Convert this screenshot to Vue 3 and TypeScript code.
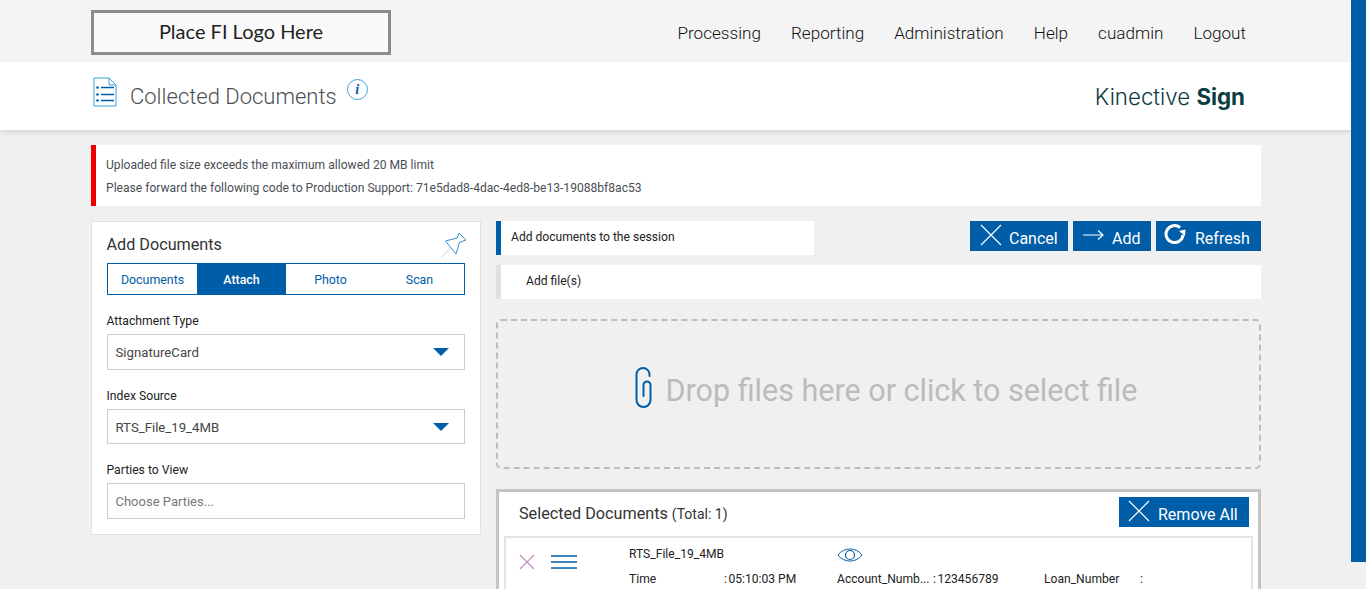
<script setup lang="ts">
const nav: string[] = ['Processing', 'Reporting', 'Administration', 'Help', 'cuadmin', 'Logout']
const tabs: { label: string; active?: boolean }[] = [
  { label: 'Documents' },
  { label: 'Attach', active: true },
  { label: 'Photo' },
  { label: 'Scan' },
]
</script>

<template>
  <div class="page">
    <div class="scroll-thumb"></div>
    <header class="top">
      <div class="wrap top-in">
        <div class="logo">Place FI Logo Here</div>
        <nav class="nav">
          <a v-for="n in nav" :key="n">{{ n }}</a>
        </nav>
      </div>
    </header>
    <section class="titlebar">
      <div class="wrap title-in">
        <svg class="doc-ic" width="24" height="30" viewBox="0 0 24 30" fill="none">
          <path d="M1 1H16L23 8V29H1Z" stroke="#3ea0d8" stroke-width="1" />
          <path d="M16 1V8H23" stroke="#3ea0d8" stroke-width="1" />
          <path d="M8 10.500H21M8 17.500H21M8 23.500H21" stroke="#005da8" stroke-width="1.600" />
          <circle cx="4.500" cy="10.500" r="1.300" fill="#005da8" />
          <circle cx="4.500" cy="17.500" r="1.300" fill="#005da8" />
          <circle cx="4.500" cy="23.500" r="1.300" fill="#005da8" />
        </svg>
        <h1 class="title">Collected Documents</h1>
        <span class="info"><i>i</i></span>
        <div class="brand">Kinective <b>Sign</b></div>
      </div>
    </section>

    <main class="wrap main">
      <div class="alert">
        <p>Uploaded file size exceeds the maximum allowed 20 MB limit</p>
        <p>Please forward the following code to Production Support: 71e5dad8-4dac-4ed8-be13-19088bf8ac53</p>
      </div>

      <div class="cols">
        <aside class="card">
          <div class="card-head">
            <h2>Add Documents</h2>
            <svg class="pin" width="26" height="26" viewBox="0 0 26 26" fill="none">
              <path d="M0.500 25.500L9 16.500" stroke="#b9d6ea" stroke-width="1" />
              <path d="M18 1L16 6L4.500 9L15 22L18.500 10.500L25 8Z" stroke="#2f8fd0" stroke-width="1" stroke-linejoin="round" />
            </svg>
          </div>
          <div class="tabs">
            <button v-for="t in tabs" :key="t.label" class="tab" :class="{ on: t.active }">{{ t.label }}</button>
          </div>
          <label class="lbl">Attachment Type</label>
          <div class="select">
            <span>SignatureCard</span><em class="caret"></em>
          </div>
          <label class="lbl">Index Source</label>
          <div class="select short">
            <span>RTS_File_19_4MB</span><em class="caret"></em>
          </div>
          <label class="lbl">Parties to View</label>
          <div class="select ph"><span>Choose Parties...</span></div>
        </aside>

        <div class="right">
          <div class="r-top">
            <div class="hint">Add documents to the session</div>
            <div class="btns">
              <button class="btn cancel">
                <svg class="up" width="22" height="22" viewBox="0 0 22 22" fill="none"><path d="M1 1L21 21M21 1L1 21" stroke="#fff" stroke-width="1.200" /></svg>
                <span class="t">Cancel</span>
              </button>
              <button class="btn add">
                <svg class="up" width="22" height="12" viewBox="0 0 22 12" fill="none"><path d="M0 6H20M15 1.500L20 6L15 10.500" stroke="#fff" stroke-width="1.200" /></svg>
                <span class="t">Add</span>
              </button>
              <button class="btn refresh">
                <svg class="up" width="24" height="24" viewBox="0 0 24 24" fill="none">
                  <path d="M16 4.500A8.500 8.500 0 1 0 19 12" stroke="#fff" stroke-width="3" />
                  <path d="M15 8L21.500 6.500L21 13Z" fill="#fff" />
                </svg>
                <span class="t">Refresh</span>
              </button>
            </div>
          </div>
          <div class="addfile">Add file(s)</div>
          <div class="drop">
            <svg class="clip" width="18" height="42" viewBox="0 0 18 42" fill="none">
              <path d="M14.500 9V7.500A6.500 6.500 0 0 0 1.500 7.500V33A7 7 0 0 0 15.500 33V18A3.500 3.500 0 0 0 8.500 18V29" stroke="#005da8" stroke-width="2" stroke-linecap="round" />
            </svg>
            <span>Drop files here or click to select file</span>
          </div>
          <section class="selected">
            <div class="sel-head">
              <div class="sel-title">Selected Documents <small>(Total: 1)</small></div>
              <button class="btn remove">
                <svg class="up" width="22" height="22" viewBox="0 0 22 22" fill="none"><path d="M1 1L21 21M21 1L1 21" stroke="#fff" stroke-width="1.200" /></svg>
                <span class="t">Remove All</span>
              </button>
            </div>
            <div class="doc">
              <div class="doc-icons">
                <svg class="ic-x" width="18" height="18" viewBox="0 0 18 18" fill="none"><path d="M2 2L16 16M16 2L2 16" stroke="#c88cc0" stroke-width="1.200" /></svg>
                <svg class="ic-lines" width="26" height="16" viewBox="0 0 26 16" fill="none"><path d="M0 2H26M0 8H26M0 14H26" stroke="#005da8" stroke-width="1.500" /></svg>
              </div>
              <div class="doc-grid">
                <div class="name">RTS_File_19_4MB</div>
                <div class="eye">
                  <svg width="26" height="16" viewBox="0 0 26 16" fill="none">
                    <path d="M1 8C7 0 19 0 25 8C19 16 7 16 1 8Z" stroke="#005da8" stroke-width="1" />
                    <circle cx="13" cy="8" r="4.500" stroke="#005da8" stroke-width="1.200" />
                  </svg>
                </div>
                <div class="blank"></div>
                <div>Time</div><div class="v"><span class="c">:</span>05:10:03 PM</div>
                <div>Account_Numb...</div><div class="v v2"><span class="c">:</span>123456789</div>
                <div class="k3">Loan_Number</div><div>:</div>
              </div>
            </div>
          </section>
        </div>
      </div>
    </main>
  </div>
</template>

<style>
html, body { margin: 0; height: 589px; overflow: hidden; background: #f0f0f0; }
</style>

<style scoped>
.page {
  position: relative;
  height: 589px;
  overflow: hidden;
  background: #f0f0f0;
  font-family: Roboto, "Liberation Sans", sans-serif;
  color: #333;
}
.scroll-thumb {
  position: absolute;
  right: 0;
  top: 0;
  width: 15px;
  height: 562px;
  background: #005da8;
  z-index: 3;
}
.wrap { width: 1170px; margin-left: 91px; }
.top { height: 62px; background: #f4f4f4; }
.top-in { display: flex; justify-content: space-between; padding-top: 10px; box-sizing: border-box; }
.logo {
  width: 300px;
  height: 45px;
  box-sizing: border-box;
  border: 3px solid #8c8c8c;
  background: #fafafa;
  font-family: Lato, sans-serif;
  font-size: 20px;
  line-height: 37px;
  text-align: center;
  color: #222;
}
.nav { display: flex; gap: 30px; padding: 13px 15px 0 0; font-size: 17.130px; font-weight: 300; line-height: 20px; color: #111; }
.titlebar { height: 68px; background: #fff; box-shadow: 0 2px 5px rgba(0, 0, 0, 0.12); position: relative; }
.title-in { display: flex; align-items: flex-start; position: relative; }
.doc-ic { margin: 15px 0 0 2px; }
.title { margin: 21px 0 0 13px; font-size: 22px; font-weight: 300; line-height: 28px; color: #4a4f55; }
.info {
  width: 19px;
  height: 19px;
  margin: 17px 0 0 10px;
  border: 1px solid #3ea0d8;
  border-radius: 50%;
  text-align: center;
  font: italic bold 14px/19px "Liberation Serif", serif;
  color: #005da8;
}
.brand { margin: 20px 16px 0 auto; font-family: Inter, sans-serif; font-size: 22.300px; font-weight: 300; line-height: 30px; color: #0c3c44; }
.brand b { font-weight: 700; }
.main { padding-top: 15px; }
.alert {
  height: 61px;
  box-sizing: border-box;
  background: #fff;
  border-left: 5px solid #ee0000;
  padding: 13px 10px 0;
  font-size: 12.100px;
  color: #4a4f55;
}
.alert p { margin: 0 0 9px; line-height: 14px; }
.cols { display: flex; gap: 15px; margin-top: 15px; align-items: flex-start; }
.card {
  width: 390px;
  height: 314px;
  box-sizing: border-box;
  background: #fff;
  border: 1px solid #e2e2e2;
  padding: 0 15px;
  flex: none;
}
.card-head { display: flex; justify-content: space-between; height: 41px; position: relative; }
.card-head h2 { margin: 13px 0 0 -0.500px; font-size: 16.200px; font-weight: 400; line-height: 20px; color: #333; }
.pin { margin: 10px -2px 0 0; }
.tabs { display: flex; height: 32px; border: 1px solid #005da8; box-sizing: border-box; }
.tab {
  flex: 1;
  border: 0;
  background: #fff;
  padding: 0;
  font: 400 12.400px Roboto, sans-serif;
  color: #005da8;
}
.tab.on { background: #005da8; color: #fff; font-weight: 500; }
.lbl { display: block; margin: 19px 0 0 -0.500px; height: 14px; font-size: 12.200px; line-height: 14px; color: #222; }
.select {
  display: flex;
  align-items: center;
  justify-content: space-between;
  height: 36px;
  margin-top: 6px;
  box-sizing: border-box;
  border: 1px solid #ccc;
  padding: 0 15px 0 7.500px;
  font-size: 13.200px;
  color: #444;
  background: #fff;
}
.select.short { height: 35px; padding-top: 1px; }
.select.ph { color: #777; font-size: 13px; }
.caret { width: 0; height: 0; border: 8px solid transparent; border-top: 8px solid #005da8; border-bottom: 0; }
.right { width: 765px; flex: none; }
.r-top { display: flex; justify-content: space-between; height: 34px; }
.hint {
  width: 318px;
  height: 34px;
  box-sizing: border-box;
  background: #fff;
  border-left: 5px solid #005da8;
  padding-left: 10px;
  font-size: 12.100px;
  line-height: 32px;
  color: #222;
}
.btns { display: flex; gap: 5px; height: 30px; }
.btn {
  display: flex;
  align-items: center;
  height: 30px;
  box-sizing: border-box;
  border: 0;
  background: #005da8;
  color: #fff;
  font: 400 16px Roboto, sans-serif;
  padding: 0;
  white-space: nowrap;
}
.btn .t { margin-top: 4px; }
.btn .up { margin-top: -2px; }
.cancel { width: 98px; padding-left: 10px; gap: 7px; }
.add { width: 78px; padding-left: 10px; gap: 7px; }
.refresh { width: 105px; padding-left: 8px; gap: 7px; }
.remove { width: 130px; padding-left: 9px; gap: 8px; }
.addfile {
  height: 34px;
  margin-top: 10px;
  box-sizing: border-box;
  background: #fff;
  border-left: 5px solid #e0e0e0;
  padding-left: 25px;
  font-size: 12.100px;
  line-height: 32px;
  color: #222;
}
.drop {
  height: 150px;
  margin-top: 20px;
  box-sizing: border-box;
  border: 2px dashed #bdbdbd;
  border-radius: 5px;
  display: flex;
  align-items: center;
  justify-content: center;
  gap: 13px;
  padding: 0 0 8px 15px;
  font-size: 30.500px;
  color: #bbb;
}
.clip { margin-top: -4px; }
.selected {
  margin-top: 20px;
  height: 200px;
  box-sizing: border-box;
  border: 3px solid #c4c4c4;
  background: #fff;
  padding: 0 5px;
}
.sel-head { display: flex; justify-content: space-between; height: 44px; padding: 5px 4px 0 15px; box-sizing: border-box; }
.sel-title { font-size: 16.200px; line-height: 20px; padding-top: 7px; color: #333; }
.sel-title small { font-size: 14px; }
.doc { display: flex; border: 2px solid #e3e3e3; height: 100px; box-sizing: border-box; }
.doc-icons { display: flex; align-items: flex-start; gap: 15px; padding: 13px 0 0 12px; width: 123px; box-sizing: border-box; flex: none; }
.ic-x { margin-top: 2px; }
.ic-lines { margin-top: 3px; }
.doc-grid {
  display: grid;
  grid-template-columns: 95px 113px 95px 113px 95px 30px;
  grid-auto-rows: 25px;
  font-size: 12.100px;
  line-height: 14px;
  color: #222;
  padding-top: 9px;
}
.name { grid-column: 1 / span 2; }
.eye { grid-column: 3 / span 2; }
.blank { grid-column: 5 / span 2; }
.v { white-space: nowrap; }
.c { margin-right: 1.500px; }
.v2 { margin-left: 1px; }
.k3 { margin-left: -1px; }
</style>
